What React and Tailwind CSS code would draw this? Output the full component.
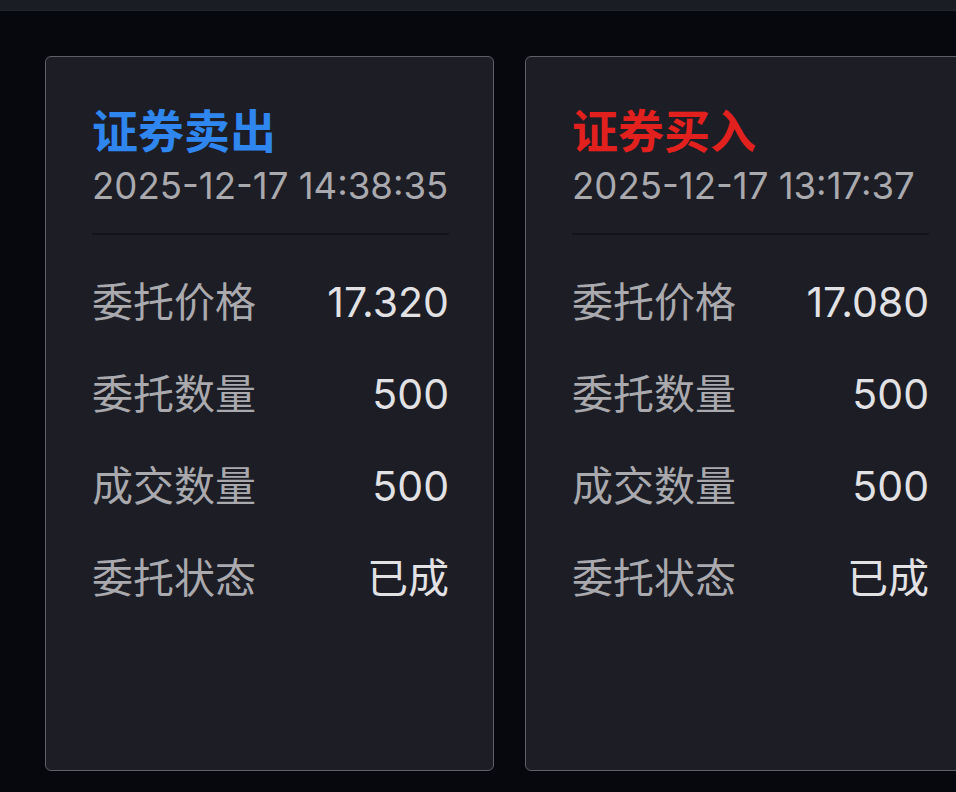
import React from 'react';

const orders = [
  {
    side: '证券卖出',
    color: 'text-[#2f86ee]',
    time: '2025-12-17 14:38:35',
    price: '17.320',
    qty: '500',
    filled: '500',
    status: '已成',
  },
  {
    side: '证券买入',
    color: 'text-[#e2211e]',
    time: '2025-12-17 13:17:37',
    price: '17.080',
    qty: '500',
    filled: '500',
    status: '已成',
  },
];

function Row({ label, value }) {
  return (
    <div className="flex items-center justify-between h-[92px]">
      <span className="text-[41px] text-[#a9a9ae]">{label}</span>
      <span className="text-[41px] text-[#e2e2e5]">{value}</span>
    </div>
  );
}

function OrderCard({ o }) {
  return (
    <div className="shrink-0 w-[449px] h-[715px] rounded-[6px] border border-[#5f6066] bg-[#1c1d25] pl-[46px] pr-[44px] pt-[46px]">
      <div className={`text-[46px] leading-[56px] font-semibold ${o.color}`}>{o.side}</div>
      <div className="text-[36.6px] leading-[54px] whitespace-nowrap text-[#a9a9ae]">{o.time}</div>
      <div className="mt-[20px] h-[2px] bg-[#131419]" />
      <div className="mt-[22px]">
        <Row label="委托价格" value={o.price} />
        <Row label="委托数量" value={o.qty} />
        <Row label="成交数量" value={o.filled} />
        <Row label="委托状态" value={o.status} />
      </div>
    </div>
  );
}

export default function App() {
  return (
    <div
      className="w-[956px] h-[792px] overflow-hidden bg-[#07080d]"
      style={{ fontFamily: 'Inter, "Noto Sans CJK SC", sans-serif' }}
    >
      <div className="h-[11px] bg-[#1b1d25] border-b border-[#22242c]" />
      <div className="flex gap-[31px] pl-[45px] pt-[45px]">
        {orders.map(o => (
          <OrderCard key={o.time} o={o} />
        ))}
      </div>
    </div>
  );
}
